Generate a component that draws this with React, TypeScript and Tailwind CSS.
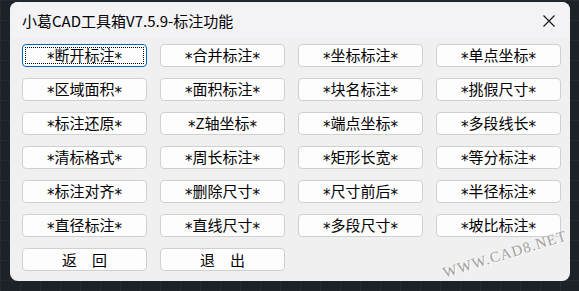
import React from "react";

const labels = [
  "*断开标注*",
  "*合并标注*",
  "*坐标标注*",
  "*单点坐标*",
  "*区域面积*",
  "*面积标注*",
  "*块名标注*",
  "*挑假尺寸*",
  "*标注还原*",
  "*Z轴坐标*",
  "*端点坐标*",
  "*多段线长*",
  "*清标格式*",
  "*周长标注*",
  "*矩形长宽*",
  "*等分标注*",
  "*标注对齐*",
  "*删除尺寸*",
  "*尺寸前后*",
  "*半径标注*",
  "*直径标注*",
  "*直线尺寸*",
  "*多段尺寸*",
  "*坡比标注*",
  "返　回",
  "退　出",
];

const font = { fontFamily: '"Noto Sans CJK SC", "Noto Sans", sans-serif' };

// asterisks sit on the middle line in the original dialog font
const Label = ({ text }: { text: string }) => {
  const parts = text.split(/(\*)/).filter(Boolean);
  return (
    <span className="relative">
      {parts.map((p, i) =>
        p === "*" ? (
          <span key={i} className="relative top-[3px] font-['DejaVu_Sans',sans-serif]">
            *
          </span>
        ) : (
          <span key={i}>{p}</span>
        )
      )}
    </span>
  );
};

const App = () => {
  return (
    <div className="w-[579px] h-[291px] overflow-hidden bg-[#1d2229] bg-[linear-gradient(#262b33_1px,transparent_1px),linear-gradient(90deg,#262b33_1px,transparent_1px)] bg-[size:20px_20px] pl-[10px] pt-[2px]" style={font}>
      <div className="relative w-[560px] h-[279px] rounded-[8px] bg-[#f0f0f0] overflow-hidden">
        <div className="h-[36px] bg-[#f3f3f6] flex items-center justify-between pl-[12px] pr-[14px]">
          <span className="text-[15px] leading-none text-black">小葛CAD工具箱V7.5.9-标注功能</span>
          <svg width="14" height="14" viewBox="0 0 14 14" className="mt-[2px]">
            <path d="M1.5 1.5 L12.5 12.5 M12.5 1.5 L1.5 12.5" stroke="#1a1a1a" strokeWidth="1.2" fill="none" />
          </svg>
        </div>
        <div className="grid grid-cols-[repeat(4,125px)] auto-rows-[23px] gap-x-[13px] gap-y-[11px] pl-[12px] pt-[6px]">
          {labels.map((label, i) => (
            <button
              key={label}
              className={`relative flex items-center justify-center rounded-[4px] bg-[#fdfdfd] text-[15px] leading-none text-black ${i === 0 ? "border border-[#0067c0]" : "border border-[#d0d0d0]"}`}
            >
              {i === 0 && <span className="absolute inset-[2px] border border-dotted border-black rounded-[1px]" />}
              <Label text={label} />
            </button>
          ))}
        </div>
        <div
          className="absolute left-[425px] top-[245px] w-[140px] text-center -rotate-[17deg] text-[15px] leading-none tracking-[1px] text-[#a0a0a0] [text-shadow:1px_1px_0_#ffffff]"
          style={{ fontFamily: '"Liberation Serif", serif' }}
        >
          WWW.CAD8.NET
        </div>
      </div>
    </div>
  );
};

export default App;
